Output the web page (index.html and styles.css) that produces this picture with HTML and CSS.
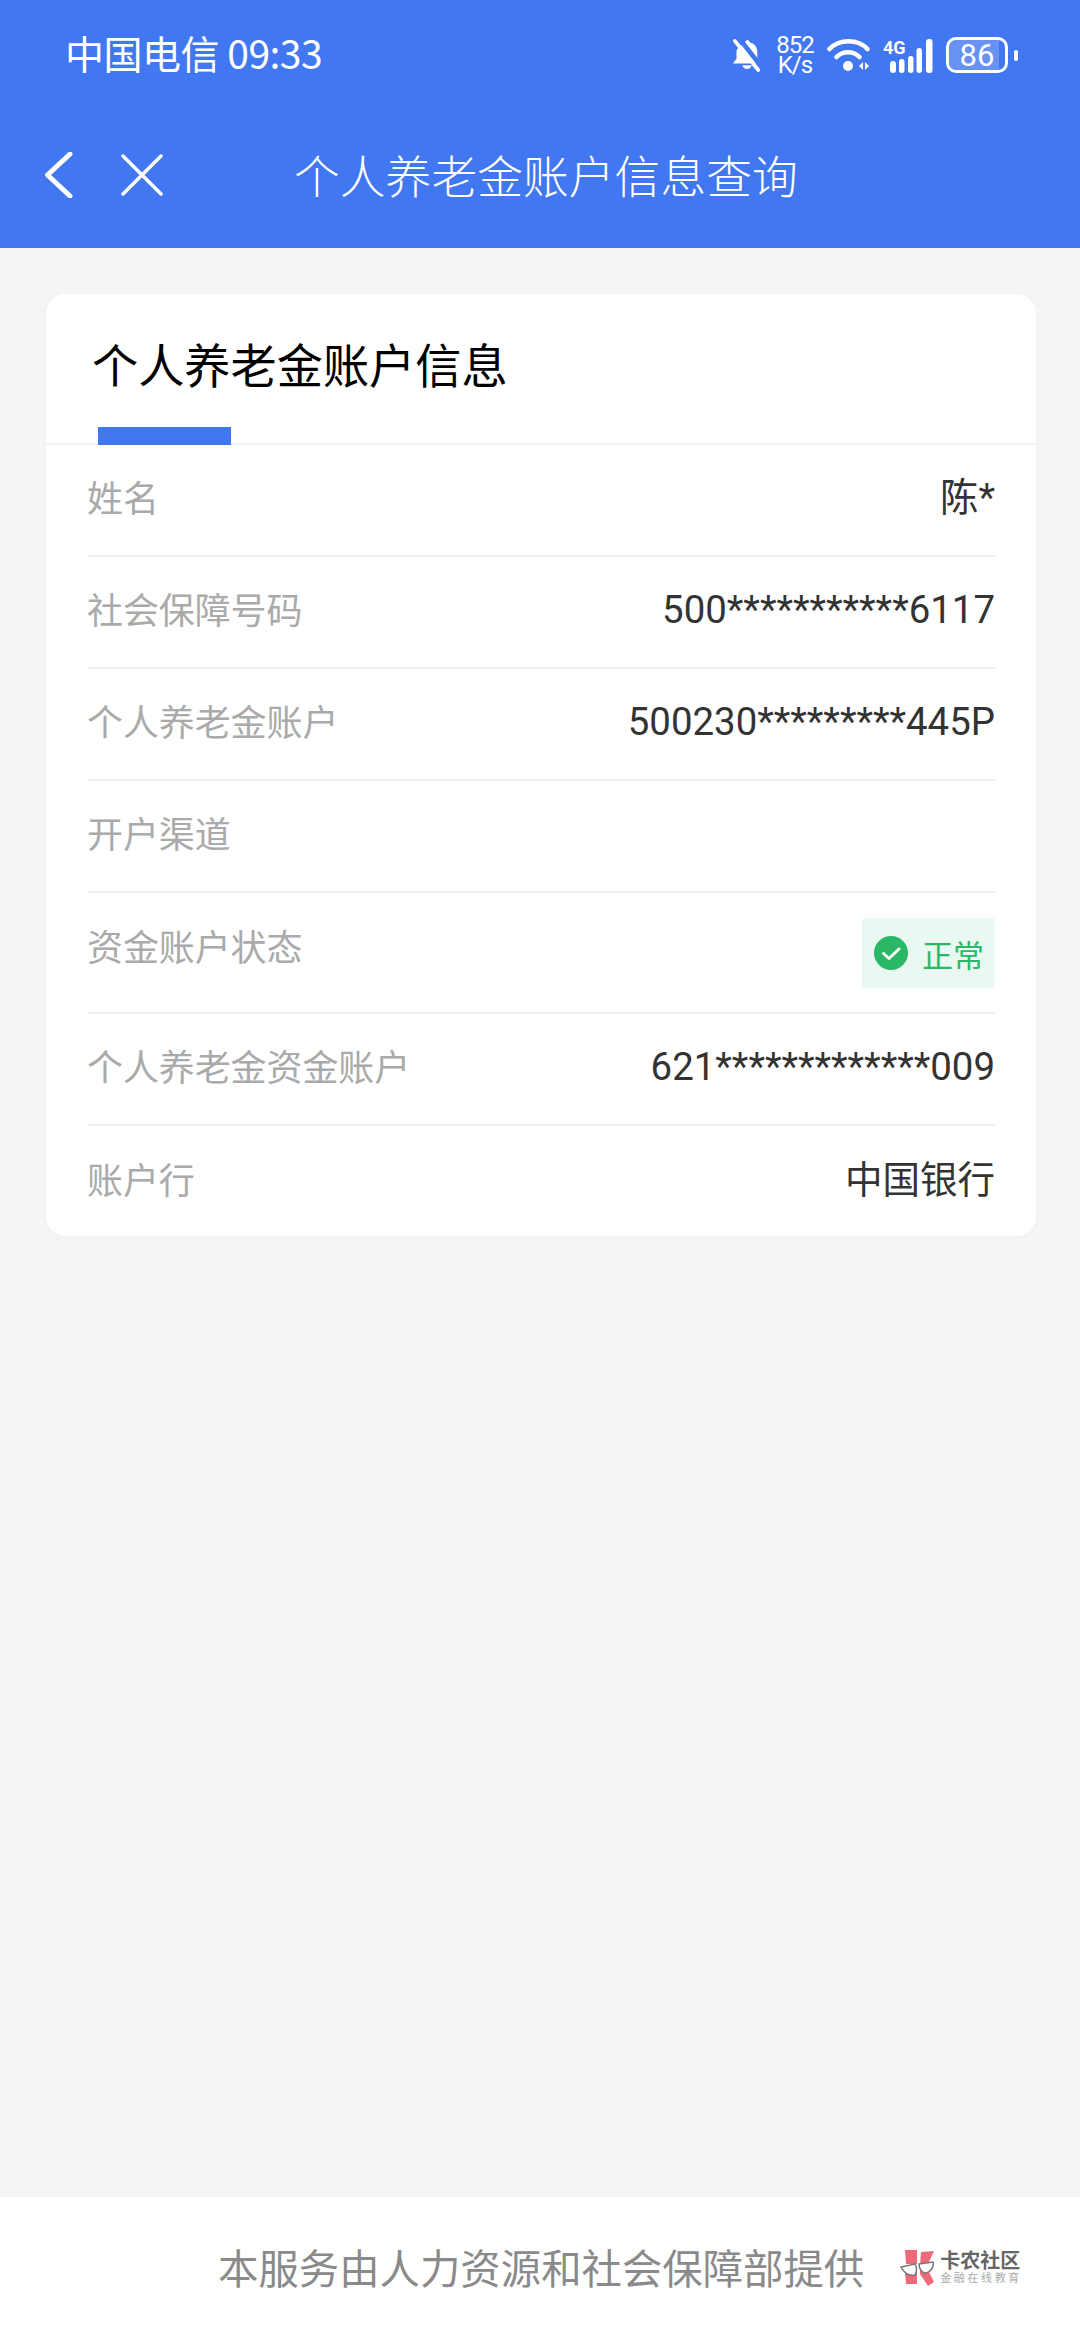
FILE: index.html
```html
<!DOCTYPE html>
<html lang="zh-CN">
<head>
<meta charset="utf-8">
<title>个人养老金账户信息查询</title>
<link rel="stylesheet" href="styles.css">
</head>
<body>
<div class="page">
  <header class="header">
    <div class="status">
      <div class="status-left">中国电信 09:33</div>
      <div class="status-right">
        <svg class="ic-bell" width="30" height="36" viewBox="0 0 32 36"><path fill="#fff" d="M16 2c1.600 0 2.800 1 3 2.600C25 6 27 10.500 27 15v7l4 5H8.500L1 27l3.800-5V15c0-1 .1-2 .4-3z"/><path fill="#fff" d="M11 29h10c-.4 2.400-2.600 4-5 4s-4.600-1.600-5-4z"/><path stroke="#4277f2" stroke-width="5" d="M6-2l28 36"/><path stroke="#fff" stroke-width="4" stroke-linecap="round" d="M3 3l25 31"/></svg>
        <div class="speed"><span>852</span><span>K/s</span></div>
        <svg class="ic-wifi" width="44" height="36" viewBox="0 0 44 36"><g fill="none" stroke="#fff" stroke-width="4.500" stroke-linecap="round"><path d="M2.500 12C12 1.500 31 1.500 40.500 12"/><path d="M9.500 20c6-6.500 17-6.500 23 0"/></g><circle cx="21" cy="29" r="5" fill="#fff"/><path fill="#fff" d="M36 25v8l-4-4zM38 25v8l4-4z"/></svg>
        <svg class="ic-signal" width="50" height="40" viewBox="0 0 50 40"><text x="0" y="19" class="net">4G</text><g fill="#fff"><rect x="7" y="26" width="6" height="12" rx="3"/><rect x="16" y="24" width="5.500" height="14" rx="2.700"/><rect x="25" y="21" width="5.500" height="17" rx="2.700"/><rect x="33.500" y="13" width="5.500" height="25" rx="2.700"/><rect x="43" y="4" width="6.500" height="34" rx="3"/></g></svg>
        <div class="battery"><div class="battery-body"><span class="battery-fill"></span><span class="battery-num">86</span></div><span class="battery-tip"></span></div>
      </div>
    </div>
    <nav class="nav">
      <svg class="ic-back" width="30" height="46" viewBox="0 0 30 46"><path d="M26 2L3.500 23 26 44" fill="none" stroke="#fff" stroke-width="5" stroke-linecap="round" stroke-linejoin="round"/></svg>
      <svg class="ic-close" width="42" height="42" viewBox="0 0 42 42"><path d="M2 2l38 38M40 2L2 40" fill="none" stroke="#fff" stroke-width="3.500" stroke-linecap="round"/></svg>
      <h1 class="nav-title">个人养老金账户信息查询</h1>
    </nav>
  </header>

  <main class="main">
    <section class="card">
      <div class="tab-head">
        <h2 class="tab-title">个人养老金账户信息</h2>
        <span class="tab-bar"></span>
      </div>
      <div class="rows">
        <div class="row"><span class="label">姓名</span><span class="value">陈*</span></div>
        <div class="row"><span class="label">社会保障号码</span><span class="value">500***********6117</span></div>
        <div class="row"><span class="label">个人养老金账户</span><span class="value">500230*********445P</span></div>
        <div class="row"><span class="label">开户渠道</span><span class="value"></span></div>
        <div class="row row-status"><span class="label">资金账户状态</span>
          <span class="badge">
            <svg width="34" height="34" viewBox="0 0 34 34"><circle cx="17" cy="17" r="17" fill="#2bb866"/><path d="M9.500 17.500l5.500 5 10-9.500" fill="none" stroke="#fff" stroke-width="3" stroke-linecap="round" stroke-linejoin="round"/></svg>
            <span class="badge-text">正常</span>
          </span>
        </div>
        <div class="row"><span class="label">个人养老金资金账户</span><span class="value">621*************009</span></div>
        <div class="row"><span class="label">账户行</span><span class="value value-cjk">中国银行</span></div>
      </div>
    </section>
  </main>

  <footer class="footer">
    <span class="footer-text">本服务由人力资源和社会保障部提供</span>
    <div class="logo">
      <svg width="36" height="38" viewBox="0 0 36 38"><g fill="#ee6a78"><path d="M5 1h12v14H6z"/><path d="M21 3l13-1-6 13-8 2z"/><path d="M5 24l12-4v15H6z"/><path d="M20 20l7-1 7 14-6 4-8-12z"/></g><path fill="#fff" stroke="#777" stroke-width="1.500" d="M1 18l14-3c2 3 2 8 0 11-6 1-11-2-14-8zM19 15l14-2c1 5-2 10-7 11-4 0-7-4-7-9z"/></svg>
      <div class="logo-text"><span class="logo-main">卡农社区</span><span class="logo-sub">金融在线教育</span></div>
    </div>
  </footer>
</div>
</body>
</html>
```

FILE: styles.css
```css
* { box-sizing: border-box; margin: 0; padding: 0; }
html, body { width: 1080px; height: 2340px; overflow: hidden; }
body { font-family: "Noto Sans CJK SC", "Noto Sans", sans-serif; background: #f5f5f5; }
.page { width: 1080px; height: 2340px; display: flex; flex-direction: column; }

.header { height: 248px; background: #4277f2; color: #fff; display: flex; flex-direction: column; flex: none; }
.status { height: 106px; display: flex; justify-content: space-between; align-items: center; padding: 0 62px 0 65px; }
.status-left { font-size: 39px; line-height: 1; letter-spacing: -.5px; font-weight: 400; white-space: nowrap; margin-top: -2px; }
.status-right { display: flex; align-items: center; margin-top: 4px; }
.ic-bell { margin-right: 15px; }
.speed { display: flex; flex-direction: column; width: 36px; font-family: Roboto, sans-serif; font-size: 24px; line-height: 20px; letter-spacing: -1px; align-items: center; margin-right: 14px; white-space: nowrap; }
.ic-wifi { margin-right: 12px; }
.net { font-family: Roboto, sans-serif; font-size: 18px; font-weight: 700; fill: #fff; }
.ic-signal { margin-right: 13px; }
.battery { display: flex; align-items: center; gap: 6px; }
.battery-body { position: relative; width: 62px; height: 36px; border: 3px solid #fff; border-radius: 10px; overflow: hidden; display: flex; align-items: center; justify-content: center; }
.battery-fill { position: absolute; left: 0; top: 0; bottom: 0; width: 90%; background: rgba(255,255,255,.2); }
.battery-num { position: relative; font-family: Roboto, sans-serif; font-size: 31px; line-height: 1; }
.battery-tip { width: 4px; height: 11px; background: #fff; border-radius: 2px; }

.nav { flex: 1; display: flex; align-items: center; padding: 0 0 5px 44px; }
.ic-back { flex: none; margin-right: 47px; }
.ic-close { flex: none; margin-right: 131px; }
.nav-title { font-size: 45.800px; font-weight: 300; line-height: 1; white-space: nowrap; }

.main { flex: 1; padding: 46px 44px 0 46px; }
.card { background: #fff; border-radius: 20px; box-shadow: 0 2px 10px rgba(0,0,0,.02); height: 942px; }
.tab-head { height: 151px; border-bottom: 2px solid #f3f3f3; position: relative; padding: 41px 0 0 46px; }
.tab-title { font-size: 46.200px; font-weight: 400; line-height: 56px; color: #000; white-space: nowrap; }
.tab-bar { position: absolute; left: 52px; bottom: -2px; width: 133px; height: 18px; background: #4277f2; }

.rows { padding: 0 41px; }
.row { height: 112px; display: flex; justify-content: space-between; align-items: center; border-bottom: 2px solid #f0f0f0; padding-bottom: 8px; }
.row:last-child { border-bottom: 0; height: 111px; }
.row-status { height: 121px; padding-bottom: 0; align-items: flex-start; }
.row-status .label { margin-top: 30px; }
.label { font-size: 36px; color: #aaa; font-weight: 400; white-space: nowrap; line-height: 44px; letter-spacing: -.1px; }
.value { font-size: 38.400px; color: #333; font-weight: 400; white-space: nowrap; font-family: Roboto, "Noto Sans CJK SC", sans-serif; line-height: 44px; position: relative; top: 2px; }
.value-cjk { font-size: 37.500px; }
.badge { margin-top: 25px; width: 133px; height: 70px; background: #e9f8f1; border-radius: 4px; display: flex; align-items: center; padding-left: 12px; gap: 14px; }
.badge-text { font-size: 31px; color: #2bb866; line-height: 1; white-space: nowrap; font-weight: 400; }

.footer { height: 143px; flex: none; background: #fff; display: flex; align-items: center; padding: 0 0 2px 218px; position: relative; }
.footer-text { font-size: 40.400px; color: #8a8a8a; white-space: nowrap; line-height: 1; font-weight: 400; }
.logo { display: flex; align-items: center; gap: 4px; margin-left: 36px; }
.logo-text { display: flex; flex-direction: column; }
.logo-main { font-size: 20px; font-weight: 700; color: #666; line-height: 20px; white-space: nowrap; }
.logo-sub { font-size: 11px; color: #aaa; line-height: 15px; letter-spacing: 2.600px; white-space: nowrap; }
```
